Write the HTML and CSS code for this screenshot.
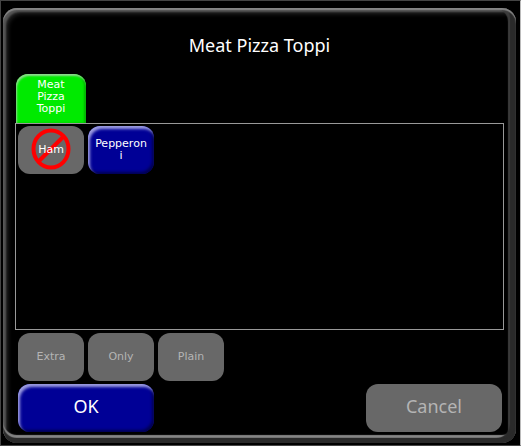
FILE: index.html
```html
<!DOCTYPE html>
<html lang="en">
<head>
  <meta charset="UTF-8" />
  <meta name="viewport" content="width=device-width, initial-scale=1" />
  <title>Meat Pizza Toppi</title>
  <link rel="stylesheet" href="styles.css">
</head>
<body>
  <main class="dialog">
    <h1 class="title">Meat Pizza Toppi</h1>

    <div class="tabs">
      <button type="button" class="tab">Meat Pizza Toppi</button>
    </div>

    <div class="toppings">
      <button type="button" class="btn">
        <svg class="no-sign" viewBox="0 0 40 42" aria-hidden="true">
          <ellipse cx="20" cy="21" rx="17.5" ry="18.5" />
          <path d="M7 34 L33 8" />
        </svg>
        <span class="label">Ham</span>
      </button>
      <button type="button" class="btn blue">Pepperoni</button>
    </div>

    <div class="modifiers">
      <button type="button" class="btn" disabled>Extra</button>
      <button type="button" class="btn" disabled>Only</button>
      <button type="button" class="btn" disabled>Plain</button>
    </div>

    <div class="actions">
      <button type="button" class="btn wide blue">OK</button>
      <button type="button" class="btn wide" disabled>Cancel</button>
    </div>
  </main>
</body>
</html>
```

FILE: styles.css
```css
* { box-sizing: border-box; }
body { margin: 0; min-height: 100vh; display: flex; padding: 7px 4px 2px 2px; background: #000; border: 1px solid #444; border-right-color: #bbb; font-family: "Noto Sans", sans-serif; color: #fff; }

/* bevelled frame: light from the top left, dark rim on the right and bottom */
.dialog {
  flex: 1; display: flex; flex-direction: column; padding: 25px 12px 11px; border-radius: 14px; background: #000;
  box-shadow: inset 0 2px 1px #858585, inset 0 -5px 1px #2a2a2a, inset -6px -5px 1px #2a2a2a, inset 0 -8px 1px #858585, inset -8px 0 1px #3c3c3c, inset 3px 4px 2px #555, inset 5px 6px 4px #222;
}
.title { margin: 0; font-size: 18px; line-height: 24px; font-weight: normal; text-align: center; }

.tabs { display: flex; margin-top: 17px; padding-left: 1px; }
.tab { width: 70px; height: 49px; padding: 4px 14px 8px; border: 0; border-radius: 12px 12px 0 0; background: #00ea00; color: #fff; font: 11px/12px "DejaVu Sans", sans-serif; box-shadow: inset 1px 2px 2px #8fd88f, inset -2px 0 2px #00b400; cursor: pointer; }

.toppings { flex: 1; display: flex; align-items: flex-start; gap: 4px; padding: 2px; border: 1px solid #999; }

.btn { position: relative; width: 66px; height: 48px; padding: 0 6px; border: 0; border-radius: 12px; background: #686868; color: #fff; font: 11px/12px "DejaVu Sans", sans-serif; overflow-wrap: anywhere; cursor: pointer; }
.btn:disabled { color: #b4b4b4; cursor: default; }
.blue { background: #000096; box-shadow: inset 2px 3px 3px #9c9ce0, inset -2px -2px 3px #000050; }
.wide { width: 136px; padding-bottom: 4px; font: 18px/24px "Noto Sans", sans-serif; }

/* crossed-out circle behind the label */
.no-sign { position: absolute; top: 2px; left: 13px; width: 40px; height: 42px; fill: none; stroke: #f00; stroke-width: 4; }
.label { position: relative; }

.modifiers { display: flex; gap: 4px; margin-top: 3px; padding-left: 3px; }
.actions { display: flex; justify-content: space-between; margin-top: 3px; padding: 0 2px 0 3px; }
```
